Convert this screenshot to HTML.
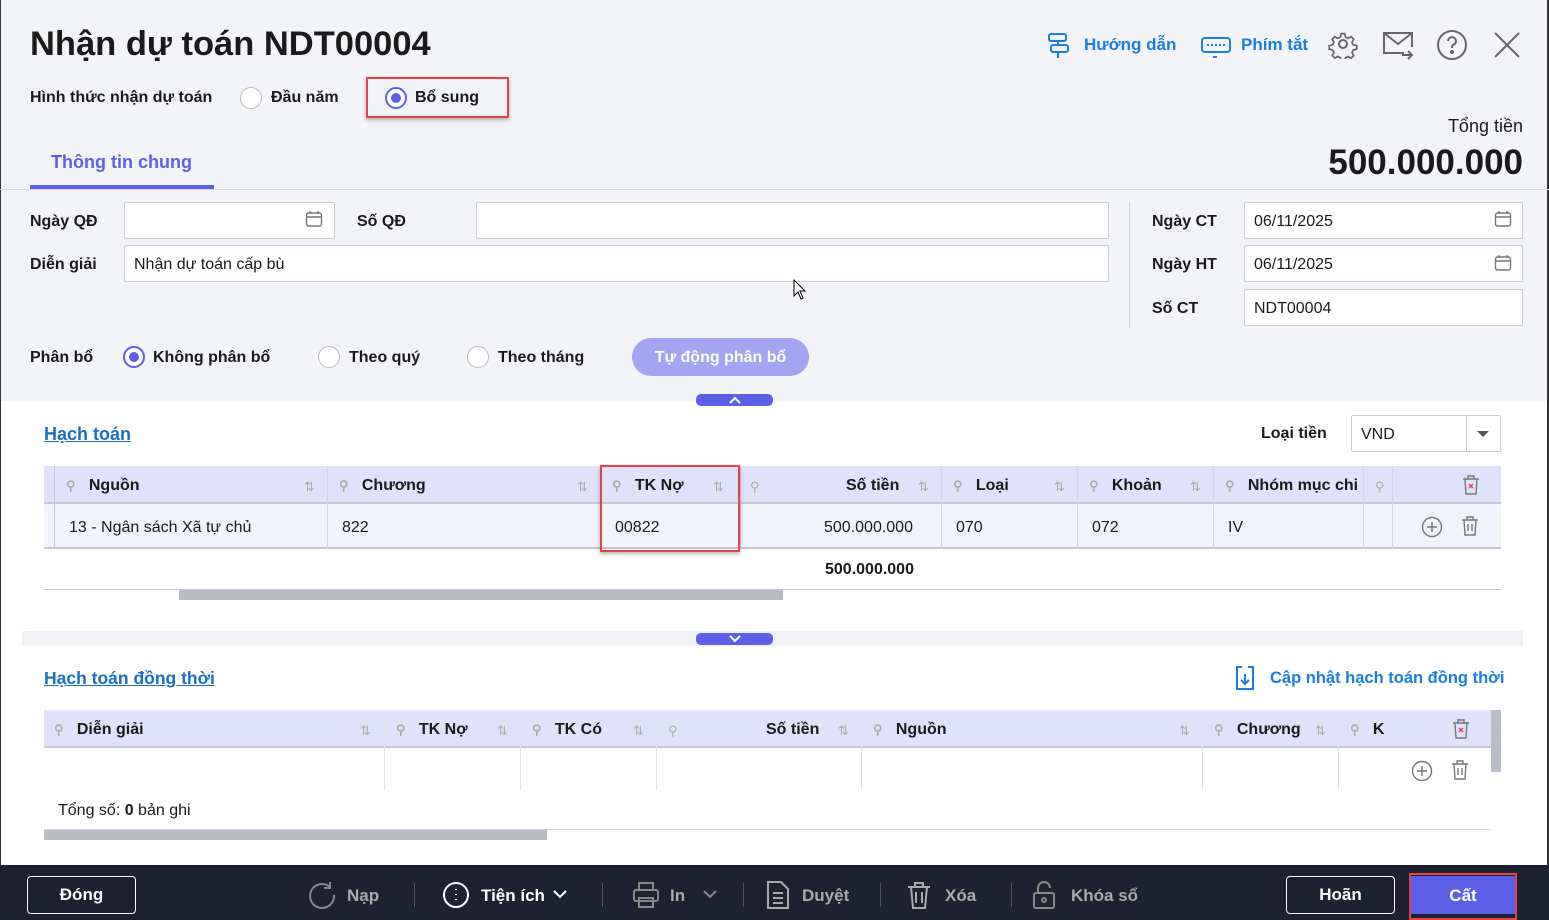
<!DOCTYPE html>
<html><head><meta charset="utf-8"><style>
*{box-sizing:border-box;margin:0;padding:0}
body{width:1549px;height:920px;overflow:hidden;font-family:"Liberation Sans",sans-serif;color:#1a1a1a;background:#fff;position:relative;font-size:16px}
.a{position:absolute}
.b{font-weight:bold}
.inp{position:absolute;background:#fff;border:1px solid #c9ccd4;border-radius:2px;height:37px;padding:0 9px;line-height:37px;font-size:16px}
.radio{position:absolute;width:22px;height:22px;border:1px solid #bbb;border-radius:50%;background:#fff}
.radio.on{border:2px solid #5c5fe8}
.radio.on::after{content:"";position:absolute;left:4px;top:4px;width:10px;height:10px;border-radius:50%;background:#5c5fe8}
.th{position:absolute;top:466px;height:38px;background:#e0e1fb;border-bottom:2px solid #c5c7d4}
.hc{position:absolute;font-weight:bold;font-size:16px}
.g{color:#aaa;font-size:13px}
.link{color:#1a6fc4;text-decoration:underline;font-weight:bold;font-size:18px}
.bt{color:#aaa;font-size:17px}
</style></head><body>
<div class="a" style="left:0;top:0;width:1549px;height:401px;background:#f3f4f8"></div>
<div class="a" style="left:0;top:0;width:1px;height:920px;background:#333"></div>
<div class="a" style="left:1547px;top:0;width:2px;height:920px;background:#333"></div>
<div class="a b" style="left:30px;top:25px;font-size:34.5px">Nhận dự toán NDT00004</div>
<div class="a b" style="left:1084px;top:35px;color:#1a7de0;font-size:17px">Hướng dẫn</div>
<svg class="a" style="left:1046px;top:31px" width="26" height="28" viewBox="0 0 26 28" fill="none" stroke="#1a7de0" stroke-width="2"><rect x="3" y="3" width="17" height="7" rx="2"/><rect x="5" y="14" width="17" height="7" rx="2"/><path d="M12 10v4M12 21v6"/></svg>
<svg class="a" style="left:1200px;top:36px" width="32" height="22" viewBox="0 0 32 22" fill="none" stroke="#1a7de0" stroke-width="2"><rect x="2" y="2" width="28" height="14" rx="3"/><path d="M7 9h18" stroke-dasharray="2 2"/><path d="M13 21h4" stroke="#5c5fe8"/></svg>
<div class="a b" style="left:1241px;top:35px;color:#1a7de0;font-size:17px">Phím tắt</div>
<svg class="a" style="left:1328px;top:29px" width="30" height="30" viewBox="0 0 30 30" fill="none" stroke="#666" stroke-width="2"><circle cx="15" cy="15" r="4"/><path d="M13 3h4l1 4 3 1.5 3.5-2 3 3-2 3.5 1.5 3 4 1v4l-4 1-1.5 3 2 3.5-3 3-3.5-2-3 1.5-1 4h-4l-1-4-3-1.5-3.5 2-3-3 2-3.5-1.5-3-4-1v-4l4-1 1.5-3-2-3.5 3-3 3.5 2 3-1.5z" transform="scale(.86) translate(2.4 2.4)"/></svg>
<svg class="a" style="left:1382px;top:31px" width="32" height="30" viewBox="0 0 32 30" fill="none" stroke="#666" stroke-width="2"><path d="M22 22H2V2h28v14"/><path d="M2 2l14 11 14-11"/><path d="M20 24h10M26 20l4 4-4 4"/></svg>
<svg class="a" style="left:1436px;top:29px" width="32" height="32" viewBox="0 0 32 32" fill="none" stroke="#666" stroke-width="2"><circle cx="16" cy="16" r="14"/><path d="M12 12a4 4 0 1 1 5 4c-1 .5-1 1.5-1 3"/><circle cx="16" cy="23" r="1" fill="#666"/></svg>
<svg class="a" style="left:1494px;top:32px" width="26" height="26" viewBox="0 0 26 26" stroke="#666" stroke-width="2"><path d="M1 1l24 24M25 1L1 25"/></svg>
<div class="a b" style="left:30px;top:89px;font-size:16px">Hình thức nhận dự toán</div>
<div class="radio" style="left:240px;top:87px"></div>
<div class="a b" style="left:271px;top:89px">Đầu năm</div>
<div class="a" style="left:366px;top:77px;width:143px;height:41px;border:2px solid #e8414a;box-shadow:0 2px 4px rgba(0,0,0,.3)"></div>
<div class="radio on" style="left:385px;top:87px"></div>
<div class="a b" style="left:415px;top:89px">Bổ sung</div>
<div class="a" style="right:26px;top:116px;font-size:18px">Tổng tiền</div>
<div class="a b" style="right:26px;top:143px;font-size:35px">500.000.000</div>
<div class="a b" style="left:51px;top:152px;color:#5c5fe8;font-size:18px">Thông tin chung</div>
<div class="a" style="left:30px;top:185px;width:184px;height:4px;background:#5c5fe8"></div>
<div class="a" style="left:0;top:189px;width:1549px;height:1px;background:#d6d8e0"></div>
<div class="a b" style="left:30px;top:213px">Ngày QĐ</div>
<div class="inp" style="left:124px;top:202px;width:211px"></div>
<svg class="a" style="left:305px;top:210px" width="18" height="18" viewBox="0 0 18 18" fill="none" stroke="#777" stroke-width="1.4"><rect x="1.5" y="3" width="15" height="13" rx="2"/><path d="M1.5 7h15M5 1v3M13 1v3"/></svg>
<div class="a b" style="left:357px;top:213px">Số QĐ</div>
<div class="inp" style="left:476px;top:202px;width:633px"></div>
<div class="a b" style="left:30px;top:256px">Diễn giải</div>
<div class="inp" style="left:124px;top:245px;width:985px">Nhận dự toán cấp bù</div>
<div class="a" style="left:1129px;top:202px;width:1px;height:126px;background:#d0d2d8"></div>
<div class="a b" style="left:1152px;top:213px">Ngày CT</div>
<div class="inp" style="left:1244px;top:202px;width:279px">06/11/2025</div>
<div class="a b" style="left:1152px;top:256px">Ngày HT</div>
<div class="inp" style="left:1244px;top:245px;width:279px">06/11/2025</div>
<svg class="a" style="left:1494px;top:210px" width="18" height="18" viewBox="0 0 18 18" fill="none" stroke="#777" stroke-width="1.4"><rect x="1.5" y="3" width="15" height="13" rx="2"/><path d="M1.5 7h15M5 1v3M13 1v3"/></svg>
<svg class="a" style="left:1494px;top:254px" width="18" height="18" viewBox="0 0 18 18" fill="none" stroke="#777" stroke-width="1.4"><rect x="1.5" y="3" width="15" height="13" rx="2"/><path d="M1.5 7h15M5 1v3M13 1v3"/></svg>
<div class="a b" style="left:1152px;top:300px">Số CT</div>
<div class="inp" style="left:1244px;top:289px;width:279px">NDT00004</div>
<div class="a b" style="left:30px;top:349px">Phân bổ</div>
<div class="radio on" style="left:123px;top:346px"></div>
<div class="a b" style="left:153px;top:349px">Không phân bổ</div>
<div class="radio" style="left:318px;top:346px"></div>
<div class="a b" style="left:349px;top:349px">Theo quý</div>
<div class="radio" style="left:467px;top:346px"></div>
<div class="a b" style="left:498px;top:349px">Theo tháng</div>
<div class="a b" style="left:632px;top:338px;width:177px;height:38px;border-radius:19px;background:#a3a5f2;color:#fff;text-align:center;line-height:40px">Tự động phân bổ</div>
<div class="a" style="left:696px;top:394px;width:77px;height:12px;border-radius:5px;background:#5c5fe8"></div>
<svg class="a" style="left:729px;top:396px" width="12" height="8" viewBox="0 0 12 8" fill="none" stroke="#fff" stroke-width="2"><path d="M1 7l5-5 5 5"/></svg>
<div class="a link" style="left:44px;top:424px">Hạch toán</div>
<div class="a b" style="left:1261px;top:425px">Loại tiền</div>
<div class="inp" style="left:1351px;top:415px;width:150px">VND</div>
<div class="a" style="left:1466px;top:416px;width:1px;height:35px;background:#ccc"></div>
<div class="a" style="left:1477px;top:431px;border:6px solid transparent;border-top:6px solid #555"></div>
<div class="th" style="left:44px;width:1457px"></div>
<div class="a" style="left:44px;top:504px;width:1457px;height:45px;background:#f2f4fd;border-bottom:2px solid #c5c7d4"></div>
<div class="a" style="left:54px;top:466px;width:1px;height:83px;background:#c5c7d4"></div>
<div class="a" style="left:327px;top:466px;width:1px;height:83px;background:#d4d6e0"></div>
<div class="a" style="left:600px;top:466px;width:1px;height:83px;background:#d4d6e0"></div>
<div class="a" style="left:740px;top:466px;width:1px;height:83px;background:#d4d6e0"></div>
<div class="a" style="left:941px;top:466px;width:1px;height:83px;background:#d4d6e0"></div>
<div class="a" style="left:1077px;top:466px;width:1px;height:83px;background:#d4d6e0"></div>
<div class="a" style="left:1213px;top:466px;width:1px;height:83px;background:#d4d6e0"></div>
<div class="a" style="left:1363px;top:466px;width:1px;height:83px;background:#d4d6e0"></div>
<div class="a" style="left:1392px;top:466px;width:1px;height:83px;background:#d4d6e0"></div>
<div class="hc" style="left:66px;top:477px"><span class="g">⚲</span>&nbsp;&nbsp;&nbsp;Nguồn</div><div class="a g" style="left:304px;top:479px">⇅</div>
<div class="hc" style="left:339px;top:477px"><span class="g">⚲</span>&nbsp;&nbsp;&nbsp;Chương</div><div class="a g" style="left:577px;top:479px">⇅</div>
<div class="hc" style="left:612px;top:477px"><span class="g">⚲</span>&nbsp;&nbsp;&nbsp;TK Nợ</div><div class="a g" style="left:713px;top:479px">⇅</div>
<div class="a g" style="left:750px;top:479px">⚲</div>
<div class="hc" style="left:846px;top:477px">Số tiền</div><div class="a g" style="left:918px;top:479px">⇅</div>
<div class="hc" style="left:953px;top:477px"><span class="g">⚲</span>&nbsp;&nbsp;&nbsp;Loại</div><div class="a g" style="left:1054px;top:479px">⇅</div>
<div class="hc" style="left:1089px;top:477px"><span class="g">⚲</span>&nbsp;&nbsp;&nbsp;Khoản</div><div class="a g" style="left:1190px;top:479px">⇅</div>
<div class="hc" style="left:1225px;top:477px;width:138px;overflow:hidden;white-space:nowrap"><span class="g">⚲</span>&nbsp;&nbsp;&nbsp;Nhóm mục chi</div>
<div class="a g" style="left:1375px;top:479px">⚲</div>
<svg class="a" style="left:1461px;top:474px" width="20" height="22" viewBox="0 0 20 22" fill="none" stroke="#777" stroke-width="1.4"><path d="M2 5h16M7 5V2h6v3M4 5l1 15h10l1-15"/><path d="M8 10l4 4M12 10l-4 4" stroke="#e8414a"/></svg>
<div class="a" style="left:69px;top:519px">13 - Ngân sách Xã tự chủ</div>
<div class="a" style="left:342px;top:519px">822</div>
<div class="a" style="left:615px;top:519px">00822</div>
<div class="a" style="left:824px;top:519px">500.000.000</div>
<div class="a" style="left:956px;top:519px">070</div>
<div class="a" style="left:1092px;top:519px">072</div>
<div class="a" style="left:1228px;top:519px">IV</div>
<svg class="a" style="left:1421px;top:516px" width="22" height="22" viewBox="0 0 22 22" fill="none" stroke="#777" stroke-width="1.4"><circle cx="11" cy="11" r="9.5"/><path d="M11 6v10M6 11h10"/></svg>
<svg class="a" style="left:1460px;top:515px" width="20" height="22" viewBox="0 0 20 22" fill="none" stroke="#777" stroke-width="1.4"><path d="M2 5h16M7 5V2h6v3M4 5l1 15h10l1-15M8 9v7M12 9v7"/></svg>
<div class="a" style="left:600px;top:465px;width:140px;height:87px;border:2px solid #e8414a;box-shadow:0 2px 4px rgba(0,0,0,.3)"></div>
<div class="a b" style="left:825px;top:561px">500.000.000</div>
<div class="a" style="left:44px;top:589px;width:1457px;height:1px;background:#c5c7d4"></div>
<div class="a" style="left:179px;top:590px;width:604px;height:10px;background:#b8bcc4"></div>
<div class="a" style="left:22px;top:631px;width:1501px;height:15px;background:#f0f1f5"></div>
<div class="a" style="left:696px;top:633px;width:77px;height:12px;border-radius:5px;background:#5c5fe8"></div>
<svg class="a" style="left:729px;top:635px" width="12" height="8" viewBox="0 0 12 8" fill="none" stroke="#fff" stroke-width="2"><path d="M1 1l5 5 5-5"/></svg>
<div class="a link" style="left:44px;top:668px;font-size:17.5px">Hạch toán đồng thời</div>
<svg class="a" style="left:1234px;top:665px" width="22" height="26" viewBox="0 0 22 26" fill="none" stroke="#1a7de0" stroke-width="2"><path d="M8 2H3v22h16V2h-5"/><path d="M11 9v10M7 15l4 4 4-4"/></svg>
<div class="a b" style="left:1270px;top:669px;color:#1a7de0;font-size:16.5px">Cập nhật hạch toán đồng thời</div>
<div class="a" style="left:44px;top:710px;width:1447px;height:38px;background:#e0e1fb;border-bottom:2px solid #c5c7d4"></div>
<div class="a" style="left:1491px;top:710px;width:10px;height:62px;background:#b8bcc4"></div>
<div class="a" style="left:384px;top:710px;width:1px;height:80px;background:#e0e2ea"></div>
<div class="a" style="left:520px;top:710px;width:1px;height:80px;background:#e0e2ea"></div>
<div class="a" style="left:656px;top:710px;width:1px;height:80px;background:#e0e2ea"></div>
<div class="a" style="left:861px;top:710px;width:1px;height:80px;background:#e0e2ea"></div>
<div class="a" style="left:1202px;top:710px;width:1px;height:80px;background:#e0e2ea"></div>
<div class="a" style="left:1338px;top:710px;width:1px;height:80px;background:#e0e2ea"></div>
<div class="hc" style="left:54px;top:721px"><span class="g">⚲</span>&nbsp;&nbsp;&nbsp;Diễn giải</div><div class="a g" style="left:360px;top:723px">⇅</div>
<div class="hc" style="left:396px;top:721px"><span class="g">⚲</span>&nbsp;&nbsp;&nbsp;TK Nợ</div><div class="a g" style="left:497px;top:723px">⇅</div>
<div class="hc" style="left:532px;top:721px"><span class="g">⚲</span>&nbsp;&nbsp;&nbsp;TK Có</div><div class="a g" style="left:633px;top:723px">⇅</div>
<div class="a g" style="left:668px;top:723px">⚲</div>
<div class="hc" style="left:766px;top:721px">Số tiền</div><div class="a g" style="left:838px;top:723px">⇅</div>
<div class="hc" style="left:873px;top:721px"><span class="g">⚲</span>&nbsp;&nbsp;&nbsp;Nguồn</div><div class="a g" style="left:1179px;top:723px">⇅</div>
<div class="hc" style="left:1214px;top:721px"><span class="g">⚲</span>&nbsp;&nbsp;&nbsp;Chương</div><div class="a g" style="left:1315px;top:723px">⇅</div>
<div class="hc" style="left:1350px;top:721px"><span class="g">⚲</span>&nbsp;&nbsp;&nbsp;K</div>
<svg class="a" style="left:1451px;top:718px" width="20" height="22" viewBox="0 0 20 22" fill="none" stroke="#777" stroke-width="1.4"><path d="M2 5h16M7 5V2h6v3M4 5l1 15h10l1-15"/><path d="M8 10l4 4M12 10l-4 4" stroke="#e8414a"/></svg>
<svg class="a" style="left:1411px;top:760px" width="22" height="22" viewBox="0 0 22 22" fill="none" stroke="#777" stroke-width="1.4"><circle cx="11" cy="11" r="9.5"/><path d="M11 6v10M6 11h10"/></svg>
<svg class="a" style="left:1450px;top:759px" width="20" height="22" viewBox="0 0 20 22" fill="none" stroke="#777" stroke-width="1.4"><path d="M2 5h16M7 5V2h6v3M4 5l1 15h10l1-15M8 9v7M12 9v7"/></svg>
<div class="a" style="left:58px;top:802px">Tổng số: <b>0</b> bản ghi</div>
<div class="a" style="left:44px;top:829px;width:1447px;height:1px;background:#d4d6e0"></div>
<div class="a" style="left:44px;top:830px;width:503px;height:10px;background:#b8bcc4"></div>
<div class="a" style="left:0;top:865px;width:1549px;height:55px;background:#1e2130"></div>
<div class="a b" style="left:27px;top:876px;width:109px;height:38px;border:1.5px solid #fff;border-radius:4px;color:#fff;text-align:center;line-height:36px;font-size:17px">Đóng</div>
<svg class="a" style="left:308px;top:881px" width="28" height="28" viewBox="0 0 28 28" fill="none" stroke="#888" stroke-width="2"><path d="M22 6A12 12 0 1 0 26 14"/><path d="M22 1v6h-6"/></svg>
<div class="a b bt" style="left:347px;top:886px">Nạp</div>
<div class="a" style="left:414px;top:883px;width:1px;height:24px;background:#555"></div>
<svg class="a" style="left:442px;top:881px" width="28" height="28" viewBox="0 0 28 28" fill="none" stroke="#fff" stroke-width="2"><circle cx="14" cy="14" r="12"/><path d="M14 8v1M14 13v1M14 18v1"/></svg>
<div class="a b" style="left:481px;top:886px;color:#fff;font-size:17px">Tiện ích</div>
<svg class="a" style="left:553px;top:890px" width="14" height="9" viewBox="0 0 14 9" fill="none" stroke="#fff" stroke-width="2"><path d="M1 1l6 6 6-6"/></svg>
<div class="a" style="left:602px;top:883px;width:1px;height:24px;background:#555"></div>
<svg class="a" style="left:632px;top:881px" width="28" height="28" viewBox="0 0 28 28" fill="none" stroke="#888" stroke-width="2"><rect x="7" y="2" width="14" height="7"/><rect x="2" y="9" width="24" height="11" rx="2"/><rect x="7" y="17" width="14" height="9"/></svg>
<div class="a b bt" style="left:670px;top:886px">In</div>
<svg class="a" style="left:703px;top:890px" width="14" height="9" viewBox="0 0 14 9" fill="none" stroke="#888" stroke-width="2"><path d="M1 1l6 6 6-6"/></svg>
<div class="a" style="left:743px;top:883px;width:1px;height:24px;background:#555"></div>
<svg class="a" style="left:766px;top:880px" width="24" height="30" viewBox="0 0 24 30" fill="none" stroke="#aaa" stroke-width="2"><path d="M2 2h13l7 7v19H2z"/><path d="M7 13h10M7 18h10M7 23h10"/></svg>
<div class="a b bt" style="left:802px;top:886px">Duyệt</div>
<div class="a" style="left:880px;top:883px;width:1px;height:24px;background:#555"></div>
<svg class="a" style="left:906px;top:880px" width="26" height="30" viewBox="0 0 26 30" fill="none" stroke="#aaa" stroke-width="2"><path d="M2 7h22M9 7V3h8v4M5 7l2 21h12l2-21M10 12v11M16 12v11"/></svg>
<div class="a b bt" style="left:945px;top:886px">Xóa</div>
<div class="a" style="left:1011px;top:883px;width:1px;height:24px;background:#555"></div>
<svg class="a" style="left:1032px;top:880px" width="24" height="30" viewBox="0 0 24 30" fill="none" stroke="#888" stroke-width="2"><path d="M6 13V8a6 6 0 0 1 12 0"/><rect x="2" y="13" width="20" height="15" rx="2"/><circle cx="12" cy="20" r="2"/></svg>
<div class="a b bt" style="left:1071px;top:886px">Khóa sổ</div>
<div class="a b" style="left:1286px;top:876px;width:109px;height:38px;border:1.5px solid #fff;border-radius:4px;color:#fff;text-align:center;line-height:36px;font-size:17px">Hoãn</div>
<div class="a" style="left:1409px;top:873px;width:108px;height:47px;border:2px solid #e8414a"></div>
<div class="a b" style="left:1411px;top:876px;width:104px;height:38px;background:#5c5fe8;color:#fff;text-align:center;line-height:40px;font-size:17px">Cất</div>
<svg class="a" style="left:793px;top:279px" width="14" height="22" viewBox="0 0 14 22"><path d="M1 1v16l4-4 3 7 2-1-3-7h5z" fill="#fff" stroke="#000"/></svg>
</body></html>
